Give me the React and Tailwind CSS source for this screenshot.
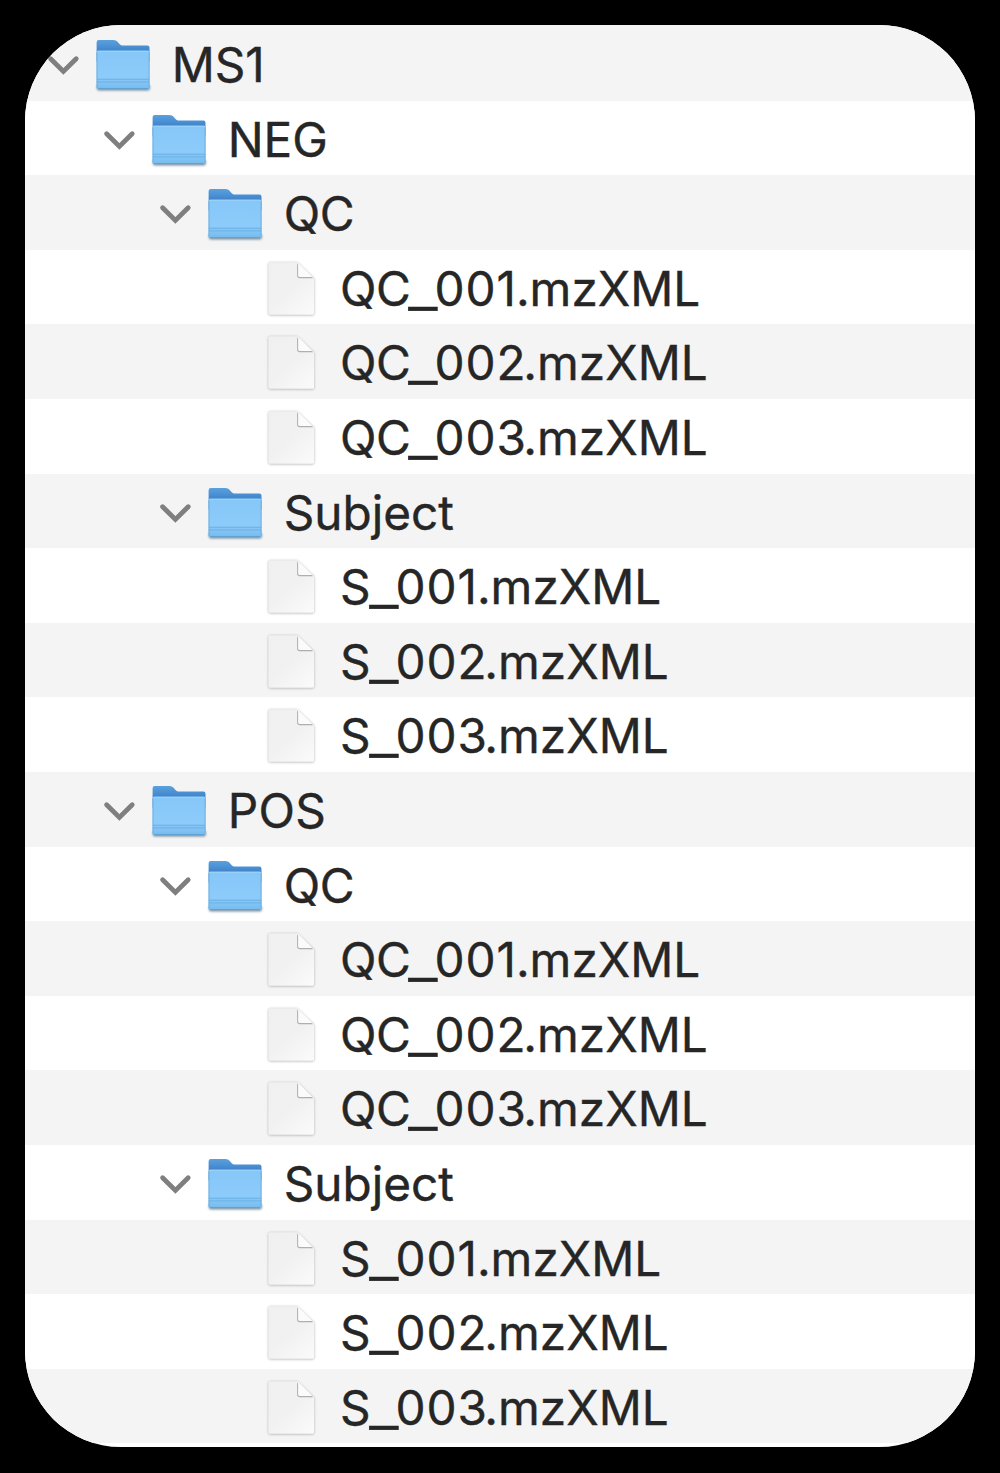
import React from "react";

const files = (prefix) => ["1", "2", "3"].map((n) => ({ kind: "file", prefix, n }));
const group = (name, spacing) => [
  { kind: "folder", name, spacing, indent: "pl-[49px]" },
  { kind: "folder", name: "QC", spacing: "tracking-[-0.3px]", indent: "pl-[105px]" },
  ...files("QC"),
  { kind: "folder", name: "Subject", spacing: "", indent: "pl-[105px]" },
  ...files("S"),
];
const rows = [
  { kind: "folder", name: "MS1", spacing: "", indent: "-ml-[7px]" },
  ...group("NEG", ""),
  ...group("POS", "tracking-[0.3px]"),
];

function Chevron() {
  return (
    <svg className="h-[75px] w-[77px] shrink-0" viewBox="0 -0.5 77 75" fill="none">
      <path d="M32.6 32.2 45.4 44.9 58.2 32.2" stroke="#7f7f7f" strokeWidth="4.8" strokeLinecap="round" strokeLinejoin="miter" />
    </svg>
  );
}

function Folder() {
  return (
    <svg className="h-[75px] w-[76.3px] shrink-0" viewBox="-0.9 -0.6 76.3 75" fill="none">
      <path d="M.9 59V62Q.9 64 3 64H52Q54 64 54 62V59Z" fill="#47677f" opacity=".7" filter="url(#soft)" />
      <path d="M.7 15.7Q.7 13.5 2.9 13.5H17.3C20 13.5 21.2 14.7 22.9 16.6 24.3 18.2 25.3 18.9 27.2 18.9H51.5Q53.6 18.9 53.6 21V35H.7Z" fill="url(#back)" />
      <path d="M.7 25.7Q.7 23.8 2.6 23.8H51.7Q53.6 23.8 53.6 25.7V60.6Q53.6 62.5 51.7 62.5H2.6Q.7 62.5.7 60.6Z" fill="url(#front)" />
      <path d="M1.5 24.8H52.8" stroke="#9bd1f8" strokeWidth="1" />
      <path d="M1.1 26V61M53.2 26V61" stroke="#6badde" strokeWidth=".9" />
      <path d="M1 52.7H53.3M1 55.3H53.3" stroke="#69afe3" strokeWidth=".9" />
      <path d="M2 62H52.3" stroke="#5d9fce" strokeWidth="1" />
    </svg>
  );
}

function FileIcon() {
  return (
    <svg className="h-[75px] w-[74px] shrink-0" viewBox="-0.9 -0.6 74 75" fill="none">
      <path d="M3.5 12H30.5L47.4 28V63Q47.4 65 45.4 65H3.7Q1.3 65 1.3 63V14Q1.3 12 3.5 12Z" fill="#777" opacity=".5" filter="url(#soft)" />
      <path d="M3.4 11.6H31L47.2 27.9V62.3Q47.2 64.2 45.2 64.2H3.4Q1.4 64.2 1.4 62.3V13.6Q1.4 11.6 3.4 11.6Z" fill="url(#paper)" />
      <path d="M30.2 13V25Q30.2 27.6 32.8 27.6H46.2Z" fill="#999" opacity=".75" filter="url(#fold)" />
      <path d="M31.2 12.6V24.9Q31.2 26.3 32.6 26.3H45.6Z" fill="#fbfbfb" />
    </svg>
  );
}

function FileName({ prefix, n }) {
  return (
    <span className="flex pt-[2px]">
      <span className={prefix === "QC" ? "w-[71px] tracking-[-0.4px]" : "w-[32px]"}>{prefix}</span>
      <span className="flex w-[23.5px] justify-center pt-px">
        <span className="scale-x-[1.34]">_</span>
      </span>
      <span className={n === "1" ? "w-[81.4px] tracking-[0.9px]" : "w-[88.8px] tracking-[0.9px]"}>
        00<span className="tracking-normal">{n}</span>
      </span>
      <span>.mzXML</span>
    </span>
  );
}

export default function App() {
  return (
    <div className="h-[1473px] w-[1000px] overflow-hidden bg-black px-[25.4px] pt-[25.3px] font-['Inter',sans-serif] text-[47.7px] leading-[74.6px] text-[#262626] [-webkit-text-stroke:0.4px_#262626]">
      <svg className="absolute h-0 w-0">
        <defs>
          <linearGradient id="back" x1="0" y1="13" x2="0" y2="26" gradientUnits="userSpaceOnUse">
            <stop stopColor="#5ba2df" />
            <stop offset="1" stopColor="#3b7fc8" />
          </linearGradient>
          <linearGradient id="front" x1="0" y1="23" x2="0" y2="62" gradientUnits="userSpaceOnUse">
            <stop stopColor="#86c7f8" />
            <stop offset=".7" stopColor="#8ccbfa" />
            <stop offset="1" stopColor="#77bcee" />
          </linearGradient>
          <linearGradient id="paper" x1="1" y1="12" x2="48" y2="64" gradientUnits="userSpaceOnUse">
            <stop stopColor="#f0f0f0" />
            <stop offset=".5" stopColor="#f1f1f1" />
            <stop offset="1" stopColor="#fbfbfb" />
          </linearGradient>
          <filter id="soft" x="-10%" y="-30%" width="120%" height="190%">
            <feGaussianBlur stdDeviation="1.1" />
          </filter>
          <filter id="fold" x="-20%" y="-20%" width="140%" height="140%">
            <feGaussianBlur stdDeviation=".7" />
          </filter>
        </defs>
      </svg>
      <div className="h-[1421.7px] overflow-hidden rounded-[96px] bg-white">
        {rows.map((row, i) => (
          <div key={i} className={i % 2 ? "h-[74.6px] bg-white" : i ? "h-[74.6px] bg-[#f4f4f4]" : "h-[75.3px] bg-[#f4f4f4] pt-[0.7px]"}>
            {row.kind === "folder" ? (
              <div className={`flex h-[74.6px] ${row.indent}`}>
                <Chevron />
                <Folder />
                <span className={`pt-[2px] ${row.spacing}`}>{row.name}</span>
              </div>
            ) : (
              <div className="flex h-[74.6px] pl-[240.6px]">
                <FileIcon />
                <FileName prefix={row.prefix} n={row.n} />
              </div>
            )}
          </div>
        ))}
      </div>
    </div>
  );
}
